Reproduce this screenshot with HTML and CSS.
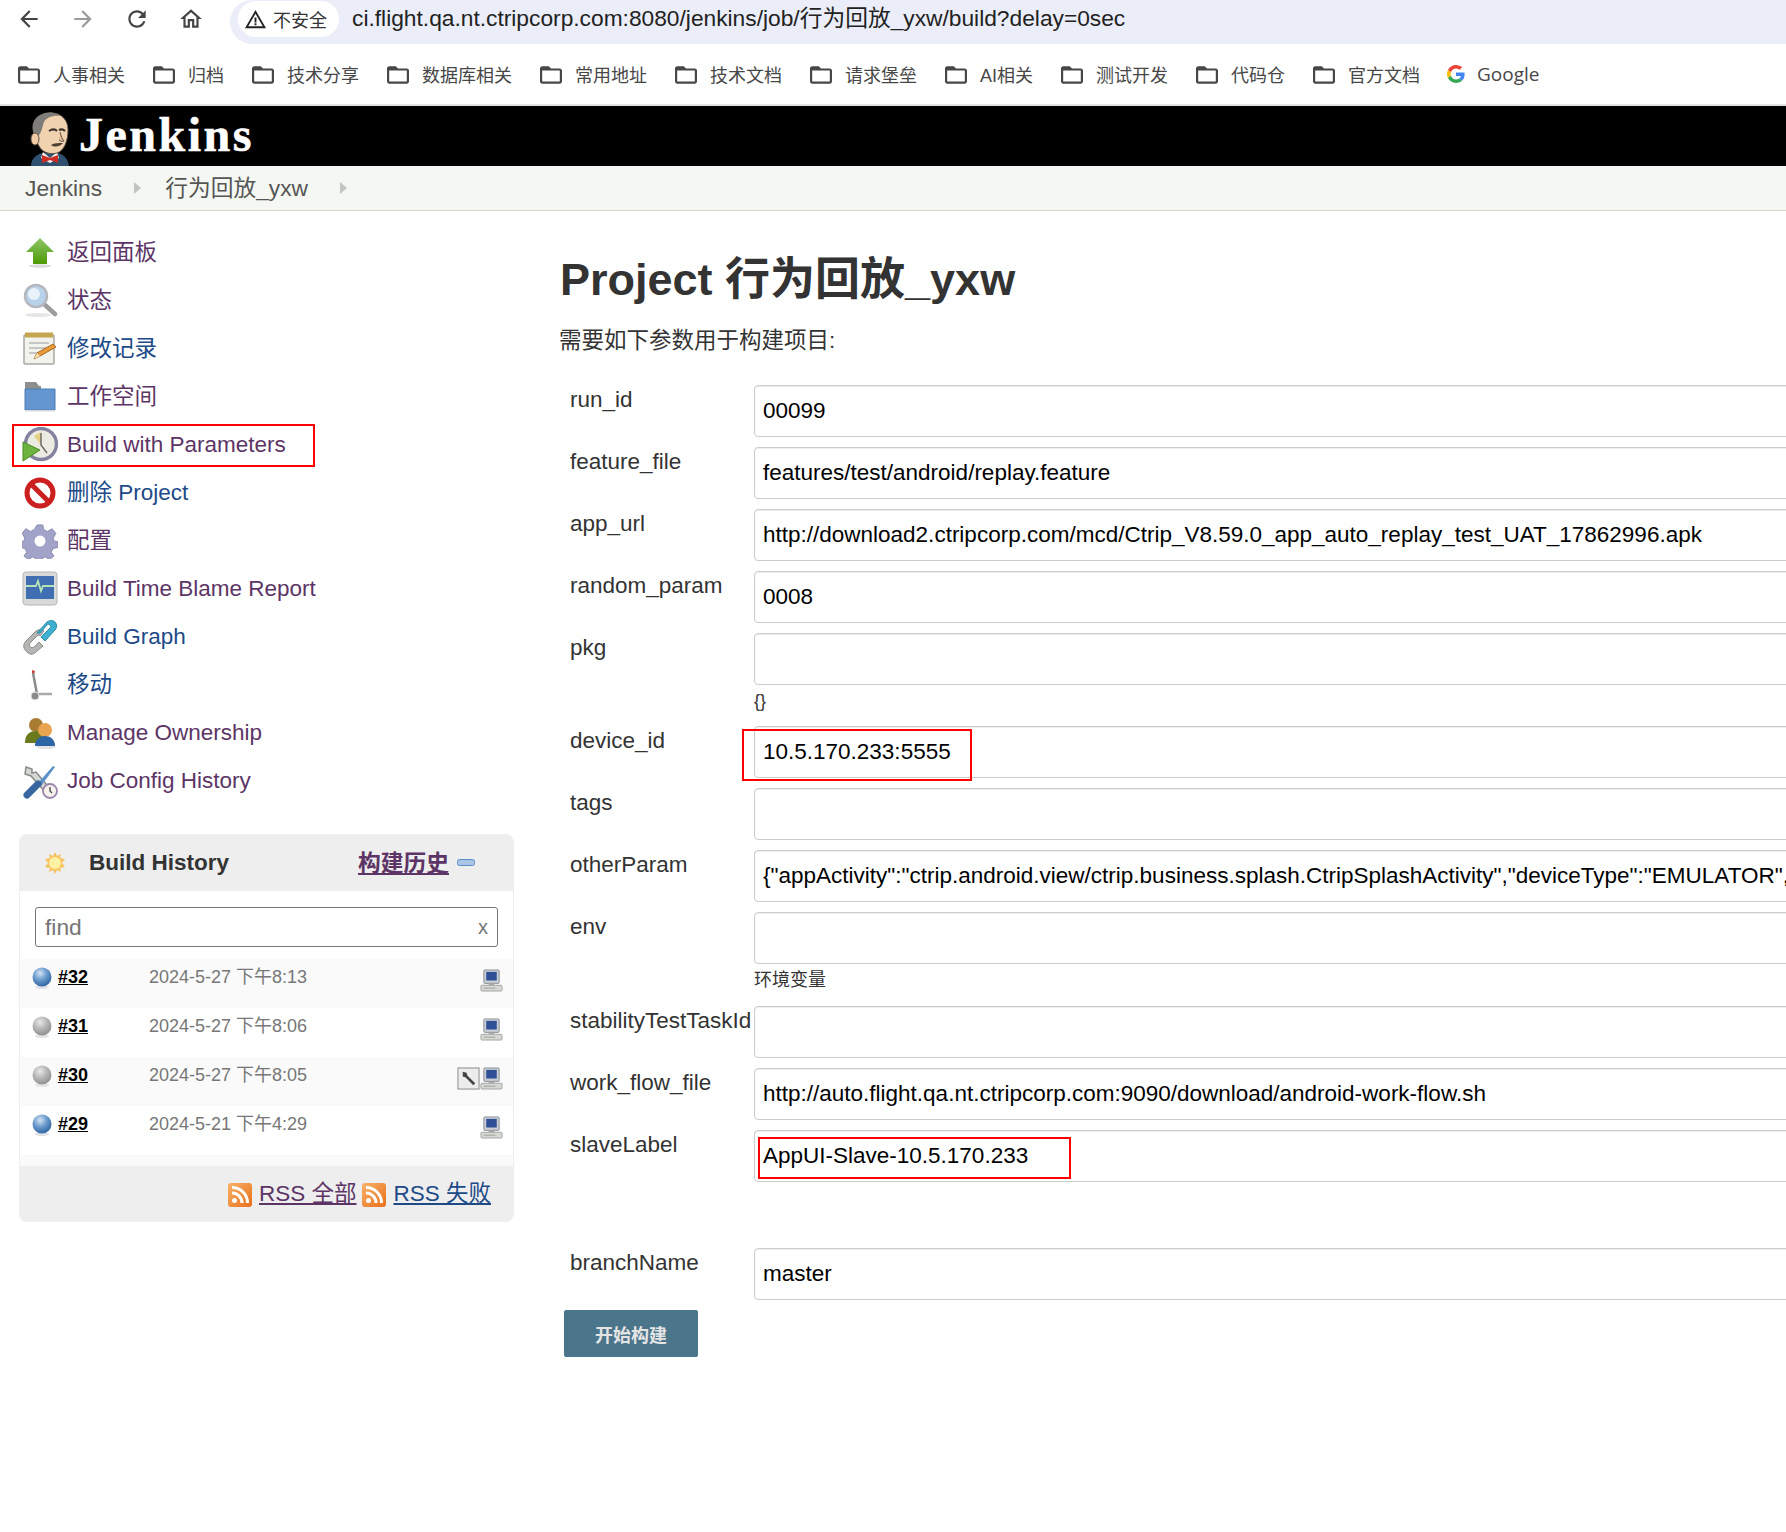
FILE: index.html
```html
<!DOCTYPE html>
<html lang="zh-CN">
<head>
    <meta charset="UTF-8">
    <title>行为回放_yxw [Jenkins]</title>
    <link rel="stylesheet" href="styles.css">
</head>
<body>
    <svg class="svg-defs" aria-hidden="true">
        <defs>
            <radialGradient id="ballBlue" cx="40%" cy="30%" r="75%">
                <stop offset="0" stop-color="#d6e4f2"/><stop offset=".45" stop-color="#6f9fd0"/><stop offset="1" stop-color="#2a5f9e"/>
            </radialGradient>
            <radialGradient id="ballGrey" cx="40%" cy="30%" r="75%">
                <stop offset="0" stop-color="#e8e8e8"/><stop offset=".5" stop-color="#b5b5b5"/><stop offset="1" stop-color="#8c8c8c"/>
            </radialGradient>
            <linearGradient id="rssFill" x1="0" y1="0" x2="1" y2="1">
                <stop offset="0" stop-color="#f8b26a"/><stop offset="1" stop-color="#e8701a"/>
            </linearGradient>
            <symbol id="folder" viewBox="0 0 24 24">
                <path fill="#474747" d="M20 6h-8l-2-2H4c-1.100 0-2 .9-2 2v12c0 1.100.9 2 2 2h16c1.100 0 2-.9 2-2V8c0-1.100-.9-2-2-2zm0 12H4V8h16v10z"/>
            </symbol>
            <symbol id="computer" viewBox="0 0 24 24">
                <rect x="4" y="1" width="16" height="14" rx="1" fill="#c9ced4" stroke="#8b9096"/>
                <rect x="6.500" y="3" width="11" height="9" fill="#2f4f96"/>
                <rect x="9" y="15" width="6" height="2" fill="#a5a9ad"/>
                <rect x="1" y="17" width="22" height="6" rx="1" fill="#d6d8d4" stroke="#a4a6a2"/>
                <path d="M4 20h12" stroke="#9da09b"/>
            </symbol>
            <symbol id="rss" viewBox="0 0 24 24">
                <rect width="24" height="24" rx="3" fill="url(#rssFill)"/>
                <circle cx="6.500" cy="17.500" r="2.500" fill="#fff"/>
                <path d="M4 10a10 10 0 0 1 10 10M4 4.500a15.500 15.500 0 0 1 15.500 15.500" fill="none" stroke="#fff" stroke-width="3"/>
            </symbol>
            <symbol id="ball-blue" viewBox="0 0 20 22">
                <ellipse cx="10" cy="20" rx="7" ry="2" fill="#dfe3e8"/>
                <circle cx="10" cy="10" r="9.500" fill="url(#ballBlue)"/>
            </symbol>
            <symbol id="ball-grey" viewBox="0 0 20 22">
                <ellipse cx="10" cy="20" rx="7" ry="2" fill="#e4e4e4"/>
                <circle cx="10" cy="10" r="9.500" fill="url(#ballGrey)"/>
            </symbol>
        </defs>
    </svg>

    <div class="browser-bar">
        <div class="nav-buttons">
            <svg class="nav-icon" viewBox="0 0 24 24"><path fill="#444" d="M20 11H7.830l5.590-5.590L12 4l-8 8 8 8 1.410-1.410L7.830 13H20v-2z"/></svg>
            <svg class="nav-icon" viewBox="0 0 24 24"><path fill="#9a9a9a" d="M4 11h12.170l-5.590-5.590L12 4l8 8-8 8-1.410-1.410L16.170 13H4v-2z"/></svg>
            <svg class="nav-icon" viewBox="0 0 24 24"><path fill="#444" d="M17.650 6.350C16.200 4.900 14.210 4 12 4c-4.420 0-7.990 3.580-7.990 8s3.570 8 7.990 8c3.730 0 6.840-2.550 7.730-6h-2.080c-.82 2.330-3.040 4-5.650 4-3.310 0-6-2.690-6-6s2.690-6 6-6c1.660 0 3.140.69 4.220 1.780L13 11h7V4l-2.350 2.350z"/></svg>
            <svg class="nav-icon" viewBox="0 0 24 24"><path fill="#444" d="M12 5.690l5 4.500V18h-2v-6H9v6H7v-7.810l5-4.500M12 3L2 12h3v8h6v-6h2v6h6v-8h3L12 3z"/></svg>
        </div>
        <div class="address-bar">
            <span class="not-secure">
                <svg class="warn-icon" viewBox="0 0 24 24"><path fill="#222" d="M12 2L1 21h22L12 2zm0 4l7.600 13H4.400L12 6zm-1 4v5h2v-5h-2zm0 6v2h2v-2h-2z"/></svg>
                不安全
            </span>
            <span class="url">ci.flight.qa.nt.ctripcorp.com:8080/jenkins/job/行为回放_yxw/build?delay=0sec</span>
        </div>
    </div>

    <div class="bookmarks">
        <span class="bookmark"><svg class="folder-icon"><use href="#folder"/></svg>人事相关</span>
        <span class="bookmark"><svg class="folder-icon"><use href="#folder"/></svg>归档</span>
        <span class="bookmark"><svg class="folder-icon"><use href="#folder"/></svg>技术分享</span>
        <span class="bookmark"><svg class="folder-icon"><use href="#folder"/></svg>数据库相关</span>
        <span class="bookmark"><svg class="folder-icon"><use href="#folder"/></svg>常用地址</span>
        <span class="bookmark"><svg class="folder-icon"><use href="#folder"/></svg>技术文档</span>
        <span class="bookmark"><svg class="folder-icon"><use href="#folder"/></svg>请求堡垒</span>
        <span class="bookmark"><svg class="folder-icon"><use href="#folder"/></svg>AI相关</span>
        <span class="bookmark"><svg class="folder-icon"><use href="#folder"/></svg>测试开发</span>
        <span class="bookmark"><svg class="folder-icon"><use href="#folder"/></svg>代码仓</span>
        <span class="bookmark"><svg class="folder-icon"><use href="#folder"/></svg>官方文档</span>
        <span class="bookmark">
            <svg class="google-icon" viewBox="0 0 48 48">
                <path fill="#EA4335" d="M24 9.500c3.540 0 6.710 1.220 9.210 3.600l6.850-6.850C35.900 2.380 30.470 0 24 0 14.620 0 6.510 5.380 2.560 13.220l7.980 6.190C12.430 13.720 17.740 9.500 24 9.500z"/>
                <path fill="#4285F4" d="M46.980 24.550c0-1.570-.15-3.090-.38-4.550H24v9.020h12.940c-.58 2.960-2.260 5.480-4.780 7.180l7.730 6c4.510-4.180 7.090-10.360 7.090-17.650z"/>
                <path fill="#FBBC05" d="M10.530 28.590c-.48-1.450-.76-2.990-.76-4.590s.27-3.140.76-4.590l-7.980-6.190C.92 16.460 0 20.120 0 24c0 3.880.92 7.540 2.560 10.780l7.970-6.190z"/>
                <path fill="#34A853" d="M24 48c6.480 0 11.930-2.130 15.890-5.810l-7.730-6c-2.150 1.450-4.920 2.300-8.160 2.300-6.260 0-11.570-4.220-13.470-9.910l-7.980 6.190C6.510 42.620 14.620 48 24 48z"/>
            </svg>
            <span class="google-text">Google</span>
        </span>
    </div>

    <header class="jenkins-header">
        <svg class="butler" viewBox="0 0 46 54">
            <path d="M4 54c0-8 6-12 12-13h14c6 1 11 5 12 13z" fill="#30506f"/>
            <path d="M16 40l7 6 7-6 2 6-9 5-9-5z" fill="#f4f1ea"/>
            <path d="M15 43l8 3 8-3v8l-8-3-8 3z" fill="#cc2a22"/>
            <path d="M9 12C10 4 18 0 26 1c9 1 15 7 15 17 0 11-4 21-11 23-8 2-15-1-18-7C9 30 8 20 9 12z" fill="#f1d2ae" stroke="#5e5148"/>
            <path d="M9 26C3 18 5 7 13 3c6-4 16-3 21 1-8-1-14 1-17 6-2 5-2 12-8 16z" fill="#7f7d79"/>
            <ellipse cx="8" cy="27" rx="4" ry="6" fill="#efcaa2" stroke="#5e5148"/>
            <path d="M22 19c3-2 6-2 8 0M32 18c2-1 4-1 6 1" fill="none" stroke="#3a3029" stroke-width="2"/>
            <path d="M33 20c1 4 2 7 4 9-2 1-4 0-5-1" fill="#e6bd94" stroke="#5e5148"/>
            <path d="M24 33c3-2 8-2 12-2-2 3-8 5-12 2z" fill="#4c3f36"/>
        </svg>
        <span class="jenkins-name">Jenkins</span>
    </header>

    <nav class="breadcrumbs">
        <span class="crumb">Jenkins</span>
        <span class="crumb-arrow"></span>
        <span class="crumb">行为回放_yxw</span>
        <span class="crumb-arrow"></span>
    </nav>

    <div class="page">
        <aside class="side-panel">
            <ul class="tasks">
                <li class="task visited">
                    <svg class="task-icon" viewBox="0 0 36 36"><defs><linearGradient id="upGreen" x1="0" y1="0" x2="0" y2="1"><stop offset="0" stop-color="#8fc66a"/><stop offset="1" stop-color="#4e9a06"/></linearGradient></defs><path d="M18 3L32 17H25V29H11V17H4z" fill="url(#upGreen)"/><ellipse cx="18" cy="31" rx="11" ry="1.800" fill="#dcdcdc"/></svg>
                    返回面板
                </li>
                <li class="task visited">
                    <svg class="task-icon" viewBox="0 0 36 36"><ellipse cx="16" cy="32" rx="13" ry="2" fill="#e6e6e6"/><path d="M23 22l10 9" stroke="#9c9c9c" stroke-width="4.500" stroke-linecap="round"/><circle cx="14" cy="13" r="11" fill="#b9d2ec" stroke="#b4b8bd" stroke-width="2.500"/><circle cx="12" cy="11" r="6" fill="#e9f1f9"/></svg>
                    状态
                </li>
                <li class="task">
                    <svg class="task-icon" viewBox="0 0 36 36"><rect x="2" y="4" width="30" height="29" rx="1" fill="#f3f3ee" stroke="#a9a9a4" stroke-width="1.500"/><rect x="3" y="1.500" width="28" height="5" fill="#c4a64e"/><path d="M7 12h20M7 17h20M7 22h11" stroke="#b8b8b8" stroke-width="1.500"/><path d="M12 28l3-6 16-9 3 3-16 9z" fill="#e89b3c" stroke="#a9681d"/><path d="M12 28l3-6 3 3z" fill="#f4dfb4"/></svg>
                    修改记录
                </li>
                <li class="task visited">
                    <svg class="task-icon" viewBox="0 0 36 36"><path d="M3 3h11l3 4h2v20H3z" fill="#8d8f8c"/><path d="M3 10h30v21H3z" fill="#6496cf" stroke="#4e7db5"/><path d="M3 31h30v1.500H3z" fill="#d8d8d8"/></svg>
                    工作空间
                </li>
                <li class="task visited task-marked">
                    <svg class="task-icon" viewBox="0 0 36 36"><circle cx="19" cy="17" r="15.500" fill="#ecebe2" stroke="#8383a0" stroke-width="3.500"/><path d="M19 5l-7 4 7 9z" fill="#e5cf85"/><path d="M19 6v12l6 8" fill="none" stroke="#6e6e6e" stroke-width="1.500"/><path d="M1 15l17 8-17 11z" fill="#6db33f" stroke="#4e8a23"/></svg>
                    Build with Parameters
                    <span class="mark mark-task"></span>
                </li>
                <li class="task">
                    <svg class="task-icon" viewBox="0 0 36 36"><circle cx="18" cy="18" r="13" fill="#fff" stroke="#cc1f1f" stroke-width="5"/><path d="M9 9l18 18" stroke="#cc1f1f" stroke-width="5"/></svg>
                    删除 Project
                </li>
                <li class="task visited">
                    <svg class="task-icon" viewBox="0 0 36 36"><path d="M15 1h6l1 5 4 2 5-3 4 5-3 5 1 3 4 1v6l-5 1-2 4 3 4-5 4-4-3-3 1-1 5h-6l-1-5-3-1-4 3-5-4 3-4-2-4-5-1v-6l4-1 1-3-3-5 4-5 5 3 4-2z" transform="translate(1 1) scale(.94)" fill="#a1a3c9" stroke="#8587ad"/><circle cx="18" cy="18" r="5.500" fill="#fff"/></svg>
                    配置
                </li>
                <li class="task visited">
                    <svg class="task-icon" viewBox="0 0 36 36"><rect x="1" y="1" width="34" height="33" rx="3" fill="#d8dad7" stroke="#b4b6b3"/><rect x="4" y="5" width="28" height="23" fill="#3f6fb2"/><path d="M4 15h10l2-5 3 10 2-5h11" fill="none" stroke="#b6e3b6" stroke-width="1.800"/></svg>
                    Build Time Blame Report
                </li>
                <li class="task">
                    <svg class="task-icon" viewBox="0 0 36 36"><path d="M4 32c-3-3-3-7 0-10l9-9c3-3 6-3 9-1l-4 5c-1-1-2-1-3 0l-7 7c-1 1-1 3 0 4s3 1 4 0l5-5 4 4-7 6c-3 3-7 3-10-1z" fill="#b4b6b3" stroke="#8a8c89"/><path d="M15 14L25 3c3-2 6-2 8 0s2 6 0 8l-10 11-4-4 9-9c1-1 1-2 0-3s-2-1-3 0l-7 8z" fill="#3fb0cf" stroke="#2a8aa6"/></svg>
                    Build Graph
                </li>
                <li class="task">
                    <svg class="task-icon" viewBox="0 0 36 36"><path d="M10 3l3 1-1 4h-2z" fill="#c9443c"/><path d="M11 6l4 21" stroke="#8c8c8c" stroke-width="2.500"/><path d="M14 27h16" stroke="#a9a9a9" stroke-width="2.500"/><circle cx="13" cy="29" r="4" fill="#8a8a8a" stroke="#e2e2e2"/></svg>
                    移动
                </li>
                <li class="task visited">
                    <svg class="task-icon" viewBox="0 0 36 36"><circle cx="14" cy="10" r="7" fill="#a87d33"/><path d="M3 28c0-9 5-12 11-12s11 3 11 12z" fill="#6a7a1c"/><ellipse cx="24" cy="32" rx="10" ry="2" fill="#e3e3e3"/><circle cx="23" cy="15" r="7" fill="#e9a44f"/><path d="M13 31c0-7 5-10 10-10s10 3 10 10z" fill="#2d65a5"/></svg>
                    Manage Ownership
                </li>
                <li class="task visited">
                    <svg class="task-icon" viewBox="0 0 36 36"><path d="M4 4l6 2 0 4 4-1 15 18-4 4-16-18-6-2z" fill="#d5d7d3" stroke="#8a8c89" stroke-width="1.500"/><path d="M33 4l-2-1-15 17 3 3z" fill="#5c93c9"/><path d="M16 21L5 32" stroke="#3867a0" stroke-width="7" stroke-linecap="round"/><circle cx="28" cy="28" r="7" fill="#f5f3ec" stroke="#9c85ab" stroke-width="1.800"/><path d="M28 24v4l2 2" fill="none" stroke="#444" stroke-width="1.300"/></svg>
                    Job Config History
                </li>
            </ul>

            <section class="build-history">
                <div class="history-head">
                    <svg class="sun" viewBox="0 0 24 24"><path d="M12 1l2 4 4-2-1 4 5 1-3 4 3 4-5 1 1 4-4-2-2 4-2-4-4 2 1-4-5-1 3-4-3-4 5-1-1-4 4 2z" fill="#f7c260"/><circle cx="12" cy="12" r="6" fill="#fdf2a4"/></svg>
                    <span class="history-title">Build History</span>
                    <span class="history-link">构建历史</span>
                    <svg class="minus" viewBox="0 0 18 7"><rect x=".5" y=".5" width="17" height="6" rx="2" fill="#a9c4e4" stroke="#5c8fc7"/></svg>
                </div>
                <div class="history-search">
                    <div class="find-box"><span class="find-text">find</span><span class="find-clear">x</span></div>
                </div>
                <div class="build-row shaded">
                    <svg class="ball"><use href="#ball-blue"/></svg>
                    <span class="build-no">#32</span>
                    <span class="build-date">2024-5-27 下午8:13</span>
                    <span class="build-icons"><svg class="computer"><use href="#computer"/></svg></span>
                </div>
                <div class="build-row">
                    <svg class="ball"><use href="#ball-grey"/></svg>
                    <span class="build-no">#31</span>
                    <span class="build-date">2024-5-27 下午8:06</span>
                    <span class="build-icons"><svg class="computer"><use href="#computer"/></svg></span>
                </div>
                <div class="build-row shaded">
                    <svg class="ball"><use href="#ball-grey"/></svg>
                    <span class="build-no">#30</span>
                    <span class="build-date">2024-5-27 下午8:05</span>
                    <span class="build-icons">
                        <svg class="computer" viewBox="0 0 24 24"><rect x="1" y="1" width="22" height="22" fill="#ececec" stroke="#888"/><path d="M6 5l4 1 1 3 8 8-2 2-8-8-3-1z" fill="#444"/></svg>
                        <svg class="computer"><use href="#computer"/></svg>
                    </span>
                </div>
                <div class="build-row">
                    <svg class="ball"><use href="#ball-blue"/></svg>
                    <span class="build-no">#29</span>
                    <span class="build-date">2024-5-21 下午4:29</span>
                    <span class="build-icons"><svg class="computer"><use href="#computer"/></svg></span>
                </div>
                <div class="history-pad"></div>
                <div class="history-foot">
                    <svg class="rss-icon"><use href="#rss"/></svg>
                    <span class="rss-link visited">RSS 全部</span>
                    <svg class="rss-icon"><use href="#rss"/></svg>
                    <span class="rss-link">RSS 失败</span>
                </div>
            </section>
        </aside>

        <main class="main-panel">
            <h1 class="project-title">Project 行为回放_yxw</h1>
            <p class="project-note">需要如下参数用于构建项目:</p>
            <form class="param-form">
                <label class="param-label">run_id</label>
                <input class="param-input" type="text" value="00099">
                <label class="param-label">feature_file</label>
                <input class="param-input" type="text" value="features/test/android/replay.feature">
                <label class="param-label">app_url</label>
                <input class="param-input" type="text" value="http://download2.ctripcorp.com/mcd/Ctrip_V8.59.0_app_auto_replay_test_UAT_17862996.apk">
                <label class="param-label">random_param</label>
                <input class="param-input" type="text" value="0008">
                <label class="param-label">pkg</label>
                <input class="param-input" type="text">
                <div class="param-desc">{}</div>
                <label class="param-label">device_id</label>
                <div class="param-cell">
                    <input class="param-input" type="text" value="10.5.170.233:5555">
                    <span class="mark mark-device"></span>
                </div>
                <label class="param-label">tags</label>
                <input class="param-input" type="text">
                <label class="param-label">otherParam</label>
                <input class="param-input" type="text" value='{"appActivity":"ctrip.android.view/ctrip.business.splash.CtripSplashActivity","deviceType":"EMULATOR","platform":"android"}'>
                <label class="param-label">env</label>
                <input class="param-input" type="text">
                <div class="param-desc param-desc-env">环境变量</div>
                <label class="param-label">stabilityTestTaskId</label>
                <input class="param-input" type="text">
                <label class="param-label">work_flow_file</label>
                <input class="param-input" type="text" value="http://auto.flight.qa.nt.ctripcorp.com:9090/download/android-work-flow.sh">
                <label class="param-label">slaveLabel</label>
                <div class="param-cell">
                    <input class="param-input" type="text" value="AppUI-Slave-10.5.170.233">
                    <span class="mark mark-slave"></span>
                </div>
                <div class="param-desc param-desc-empty"></div>
                <label class="param-label">branchName</label>
                <input class="param-input" type="text" value="master">
            </form>
            <button class="build-button" type="button">开始构建</button>
        </main>
    </div>
</body>
</html>
```

FILE: styles.css
```css
html, body {
    margin: 0;
    padding: 0;
    overflow: hidden;
    background: #fff;
}

body {
    width: 1786px;
    height: 1532px;
    font-family: "Liberation Sans", "Noto Sans CJK SC", sans-serif;
    color: #333;
}

.svg-defs {
    position: absolute;
    width: 0;
    height: 0;
}

/* browser chrome */
.browser-bar {
    display: flex;
    height: 44px;
}

.nav-buttons {
    display: flex;
    gap: 28px;
    width: 230px;
    padding: 6px 0 0 16px;
    box-sizing: border-box;
}

.nav-icon {
    width: 26px;
    height: 26px;
}

.address-bar {
    flex: 1;
    display: flex;
    align-items: flex-start;
    gap: 13px;
    padding-left: 8px;
    background: #ebeef8;
    border-radius: 22px 0 0 22px;
}

.not-secure {
    display: flex;
    align-items: center;
    gap: 6px;
    width: 101px;
    height: 36px;
    margin-top: 1px;
    padding-left: 6px;
    box-sizing: border-box;
    background: #fff;
    border-radius: 18px;
    font-size: 18px;
    color: #333;
}

.warn-icon {
    width: 23px;
    height: 23px;
    flex: none;
}

.url {
    font-size: 22.750px;
    line-height: 36px;
    color: #222;
}

.bookmarks {
    display: flex;
    align-items: center;
    gap: 27px;
    height: 60px;
    padding-left: 17px;
    border-bottom: 2px solid #e3e3e3;
    font-size: 18px;
    color: #474747;
}

.bookmark {
    display: flex;
    align-items: center;
    gap: 12px;
}

.folder-icon {
    width: 24px;
    height: 24px;
    flex: none;
    margin-top: 1px;
    transform: scale(1.1);
}

.google-icon {
    width: 18px;
    height: 18px;
}

.google-text {
    font-family: "Open Sans", sans-serif;
    font-size: 19px;
}

/* jenkins header */
.jenkins-header {
    display: flex;
    height: 60px;
    padding-left: 27px;
    background: #000;
    overflow: hidden;
}

.butler {
    width: 46px;
    height: 54px;
    margin-top: 6px;
}

.jenkins-name {
    margin-left: 6px;
    font-family: "Liberation Serif", serif;
    font-size: 48px;
    font-weight: bold;
    letter-spacing: 2.500px;
    line-height: 58px;
    color: #fff;
    -webkit-text-stroke: .6px #fff;
}

.breadcrumbs {
    display: flex;
    align-items: center;
    height: 44px;
    padding-left: 25px;
    background: #f5f8f2;
    border-bottom: 1px solid #d3d7cf;
    font-size: 22.750px;
    line-height: 28px;
    color: #555;
}

.crumb-arrow {
    width: 0;
    height: 0;
    margin: 0 24px 0 32px;
    border-left: 7px solid #c2c5bf;
    border-top: 6px solid transparent;
    border-bottom: 6px solid transparent;
}

/* page layout */
.page {
    display: flex;
}

.side-panel {
    width: 560px;
    flex: none;
    box-sizing: border-box;
    padding-top: 18px;
}

.tasks {
    list-style: none;
    margin: 0;
    padding: 0;
}

.task {
    position: relative;
    display: flex;
    align-items: center;
    gap: 9px;
    height: 48px;
    padding-left: 22px;
    font-size: 22.500px;
    line-height: 28px;
    color: #204a87;
}

.visited {
    color: #5c3566;
}

.task-icon {
    width: 36px;
    height: 36px;
    flex: none;
}

.mark {
    position: absolute;
    box-sizing: border-box;
    border: 2px solid #f00;
    pointer-events: none;
}

.mark-task {
    left: 12px;
    top: 3px;
    width: 303px;
    height: 43px;
}

/* build history */
.build-history {
    width: 495px;
    margin: 29px 0 0 19px;
    box-sizing: border-box;
    border-radius: 8px;
    overflow: hidden;
    border-left: 1px solid #eee;
    border-right: 1px solid #eee;
}

.history-head {
    display: flex;
    align-items: center;
    height: 57px;
    padding-left: 23px;
    background: #eee;
    line-height: 28px;
}

.sun {
    width: 24px;
    height: 24px;
    flex: none;
}

.history-title {
    margin-left: 22px;
    width: 269px;
    font-size: 22.500px;
    font-weight: bold;
    color: #333;
}

.history-link {
    font-size: 22.750px;
    font-weight: bold;
    color: #5c3566;
    text-decoration: underline;
}

.minus {
    width: 18px;
    height: 7px;
    margin-left: 8px;
}

.history-search {
    height: 68px;
    padding: 16px 15px 0 15px;
    box-sizing: border-box;
}

.find-box {
    display: flex;
    align-items: center;
    justify-content: space-between;
    height: 40px;
    padding: 0 9px 0 9px;
    border: 1px solid #777;
    border-radius: 3px;
    box-sizing: border-box;
    font-size: 22.750px;
    color: #757575;
}

.find-clear {
    font-size: 20px;
}

.build-row {
    display: flex;
    height: 49px;
    padding: 8px 10px 0 12px;
    box-sizing: border-box;
}

.shaded,
.history-pad {
    background: #fafafa;
}

.history-pad {
    height: 11px;
}

.ball {
    width: 20px;
    height: 22px;
    flex: none;
}

.build-no {
    width: 91px;
    margin-left: 6px;
    font-size: 18px;
    font-weight: bold;
    line-height: 21px;
    color: #000;
    text-decoration: underline;
}

.build-date {
    flex: 1;
    font-size: 18px;
    line-height: 21px;
    color: #777;
}

.build-icons {
    display: flex;
    gap: 0;
}

.computer {
    width: 23px;
    height: 23px;
    margin-top: 2px;
}

.history-foot {
    display: flex;
    align-items: center;
    justify-content: flex-end;
    gap: 7px;
    height: 56px;
    padding-right: 23px;
    background: #eee;
    font-size: 22.500px;
    line-height: 28px;
    color: #204a87;
}

.history-foot .visited {
    color: #5c3566;
}

.rss-icon {
    width: 24px;
    height: 24px;
    flex: none;
    margin-top: 2px;
}

.rss-link {
    text-decoration: underline;
    margin-right: -1px;
}

/* main form */
.main-panel {
    flex: 1;
    min-width: 0;
    overflow: hidden;
}

.project-title {
    margin: 40px 0 0;
    font-size: 45px;
    font-weight: bold;
    line-height: 58px;
    color: #333;
}

.project-note {
    margin: 16px 0 0 -1px;
    font-size: 22.500px;
    line-height: 32px;
    color: #333;
}

.param-form {
    display: grid;
    grid-template-columns: 194px 1200px;
    row-gap: 10px;
    margin-top: 28px;
}

.param-label {
    padding: 1px 0 0 10px;
    font-size: 22.500px;
    line-height: 28px;
    color: #333;
    white-space: nowrap;
}

.param-input {
    display: block;
    width: 1200px;
    height: 52px;
    margin: 0;
    padding: 0 8px;
    box-sizing: border-box;
    border: 1px solid #ccc;
    border-radius: 4px;
    box-shadow: inset 0 1px 1px rgba(0, 0, 0, .075);
    font-family: "Liberation Sans", "Noto Sans CJK SC", sans-serif;
    font-size: 22.500px;
    color: #000;
    outline: none;
}

.param-cell {
    position: relative;
}

.param-desc {
    grid-column: 2;
    height: 26px;
    margin: -5px 0 0;
    font-size: 18px;
    line-height: 22px;
    color: #333;
}

.param-desc-env {
    height: 27px;
}

.param-desc-empty {
    height: 51px;
}

.mark-device {
    left: -12px;
    top: 3px;
    width: 230px;
    height: 52px;
}

.mark-slave {
    left: 4px;
    top: 7px;
    width: 313px;
    height: 42px;
}

.build-button {
    display: block;
    width: 134px;
    height: 47px;
    margin: 10px 0 0 4px;
    border: 1px solid #4b758b;
    border-radius: 2px;
    background: #4b758b;
    font-family: "Liberation Sans", "Noto Sans CJK SC", sans-serif;
    font-size: 18px;
    font-weight: bold;
    color: #e4e4e4;
}
```
